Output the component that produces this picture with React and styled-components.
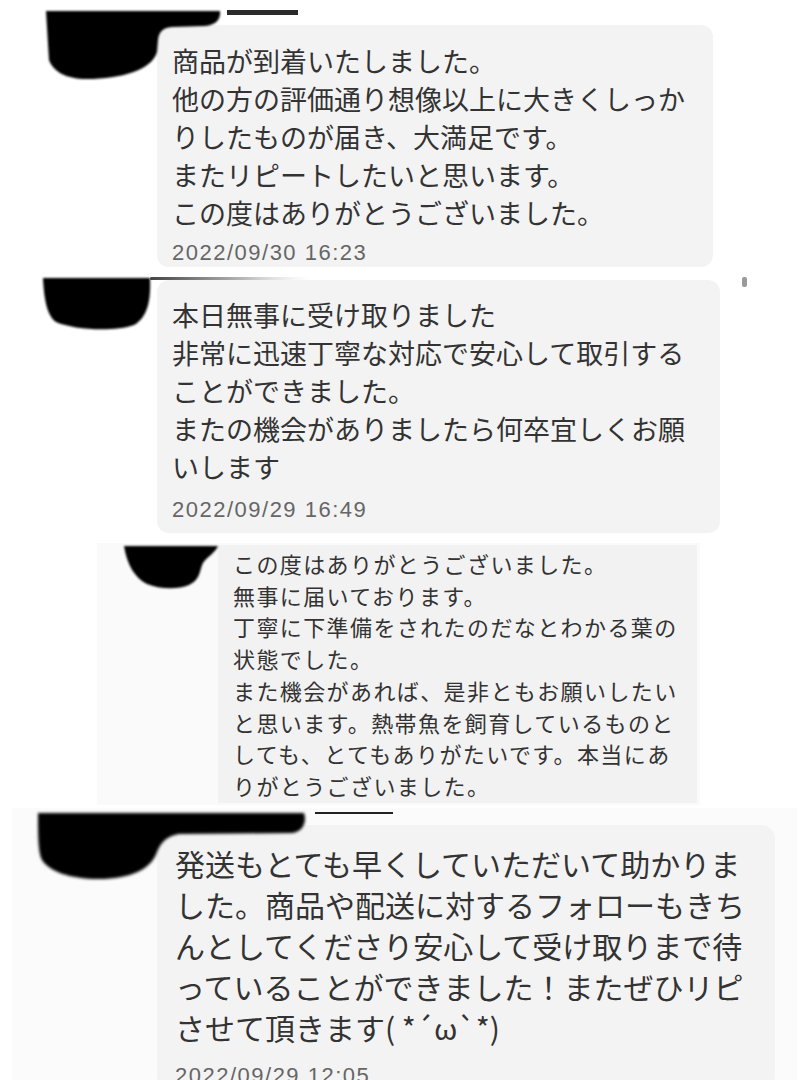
import React from 'react';
import styled, { createGlobalStyle } from 'styled-components';

const GlobalStyle = createGlobalStyle`
  html, body {
    margin: 0;
    padding: 0;
    background: #fff;
  }
  body {
    width: 810px;
    height: 1080px;
    overflow: hidden;
    font-family: "Noto Sans CJK JP", "Noto Sans", sans-serif;
  }
`;

const reviews = [
  {
    id: 1,
    lines: [
      '商品が到着いたしました。',
      '他の方の評価通り想像以上に大きくしっか',
      'りしたものが届き、大満足です。',
      'またリピートしたいと思います。',
      'この度はありがとうございました。',
    ],
    date: '2022/09/30 16:23',
  },
  {
    id: 2,
    lines: [
      '本日無事に受け取りました',
      '非常に迅速丁寧な対応で安心して取引する',
      'ことができました。',
      'またの機会がありましたら何卒宜しくお願',
      'いします',
    ],
    date: '2022/09/29 16:49',
  },
  {
    id: 3,
    lines: [
      'この度はありがとうございました。',
      '無事に届いております。',
      '丁寧に下準備をされたのだなとわかる葉の',
      '状態でした。',
      'また機会があれば、是非ともお願いしたい',
      'と思います。熱帯魚を飼育しているものと',
      'しても、とてもありがたいです。本当にあ',
      'りがとうございました。',
    ],
  },
  {
    id: 4,
    lines: [
      '発送もとても早くしていただいて助かりま',
      'した。商品や配送に対するフォローもきち',
      'んとしてくださり安心して受け取りまで待',
      'っていることができました！またぜひリピ',
      'させて頂きます( *´ω`*)',
    ],
    date: '2022/09/29 12:05',
  },
];

// Redaction blob drawn over each user name
function Blob({ width, height, d, id, blur = 1.2, fade }) {
  return (
    <svg width={width} height={height} viewBox={`0 0 ${width} ${height}`} style={{ overflow: 'visible' }}>
      <defs>
        <filter id={id} x="-10%" y="-10%" width="120%" height="120%">
          <feGaussianBlur stdDeviation={blur} />
        </filter>
        {fade && (
          <linearGradient id={`${id}-fade`} x1="0" x2="1" y1="0" y2="0">
            <stop offset="0" stopColor="#444" />
            <stop offset="0.6" stopColor="#bbb" />
            <stop offset="1" stopColor="#ddd" stopOpacity="0" />
          </linearGradient>
        )}
      </defs>
      {fade && <rect x={fade.x} y="0" width={fade.w} height="3" rx="1.5" fill={`url(#${id}-fade)`} />}
      <path d={d} fill="#000" filter={`url(#${id})`} />
    </svg>
  );
}

function Review({ review, variant }) {
  return (
    <Bubble $variant={variant}>
      <Body $variant={variant}>{review.lines.join('\n')}</Body>
      {review.date && <Stamp $variant={variant}>{review.date}</Stamp>}
    </Bubble>
  );
}

export default function App() {
  return (
    <Page>
      <GlobalStyle />

      <Crop $height={270} $padTop={10} $padLeft={45}>
        <Avatar $width={112}>
          <Blob
            id="b1"
            width={178}
            height={70}
            d="M1,1 L175,1 C176,9 171,15 160,16 L127,17 C117,18 114,22 113,30 L112,42 C107,60 76,69 42,69 C20,69 8,61 4,50 Z"
          />
        </Avatar>
        <Column $width={556}>
          <Meta $height={15}>
            <Rule $offset={70} $w={71} $h={5} $color="#2b2b2b" />
          </Meta>
          <Review review={reviews[0]} variant="large" />
        </Column>
      </Crop>

      <Crop $height={270} $padTop={7} $padLeft={42}>
        <Avatar $width={115}>
          <Blob
            id="b2"
            width={110}
            height={54}
            fade={{ x: 108, w: 160 }}
            d="M1,1 L108,1 C109,22 106,40 92,48 C72,55 32,53 14,45 C5,39 2,22 1,1 Z"
          />
        </Avatar>
        <Column $width={563}>
          <Meta $height={3} />
          <Review review={reviews[1]} variant="medium" />
        </Column>
        <Scroll />
      </Crop>

      <Crop $height={262} $top={3} $left={97} $width={603} $bg="#fafafa" $padTop={2} $padLeft={26}>
        <Avatar $width={95}>
          <Blob
            id="b3"
            width={97}
            height={45}
            d="M1,1 L95,1 C92,8 84,12 80,18 C76,26 78,34 66,40 C54,45 36,44 24,39 C12,33 4,20 1,1 Z"
          />
        </Avatar>
        <Column $width={479}>
          <Review review={reviews[2]} variant="small" />
        </Column>
      </Crop>

      <Crop $height={272} $top={3} $left={12} $width={785} $bg="#fbfbfb" $padTop={4} $padLeft={25}>
        <Avatar $width={120}>
          <Blob
            id="b4"
            width={272}
            height={70}
            blur={1.6}
            d="M1,1 L267,1 C270,10 266,20 255,21 L142,22 C130,24 124,30 120,40 C114,58 92,67 62,67 C32,67 12,59 5,48 C1,40 1,20 1,1 Z"
          />
        </Avatar>
        <Column $width={618}>
          <Meta $height={13}>
            <Rule $offset={158} $w={78} $h={2} $color="#222" />
          </Meta>
          <Review review={reviews[3]} variant="xl" />
        </Column>
      </Crop>
    </Page>
  );
}

const sizes = {
  large: { font: 27, line: 38, pad: '17px 20px 1px 15px', radius: 12, stamp: 8 },
  medium: { font: 27, line: 38, pad: '16px 20px 10px 15px', radius: 12, stamp: 11 },
  small: { font: 22, line: 31.7, pad: '3px 10px 1px 15px', radius: 0, stamp: 0, spacing: 1.4 },
  xl: { font: 30, line: 41, pad: '18px 20px 0 18px', radius: 14, stamp: 15 },
};

const Page = styled.div`
  width: 810px;
  height: 1080px;
  display: flex;
  flex-direction: column;
  overflow: hidden;
  background: #fff;
`;

const Crop = styled.section`
  flex: none;
  display: flex;
  align-items: flex-start;
  box-sizing: border-box;
  height: ${p => p.$height}px;
  margin-top: ${p => p.$top || 0}px;
  margin-left: ${p => p.$left || 0}px;
  width: ${p => (p.$width ? `${p.$width}px` : 'auto')};
  padding: ${p => p.$padTop}px 0 0 ${p => p.$padLeft}px;
  background: ${p => p.$bg || '#fff'};
  overflow: hidden;
`;

const Avatar = styled.div`
  position: relative;
  z-index: 2;
  flex: none;
  width: ${p => p.$width}px;
  line-height: 0;
`;

const Column = styled.div`
  flex: none;
  display: flex;
  flex-direction: column;
  width: ${p => p.$width}px;
`;

const Meta = styled.div`
  display: flex;
  align-items: flex-start;
  height: ${p => p.$height}px;
`;

const Rule = styled.span`
  margin-left: ${p => p.$offset}px;
  width: ${p => p.$w}px;
  height: ${p => p.$h}px;
  background: ${p => p.$color};
`;

const Scroll = styled.span`
  flex: none;
  margin-left: 22px;
  width: 5px;
  height: 10px;
  border-radius: 2px;
  background: #9a9a9a;
`;

const Bubble = styled.div`
  background: ${p => (p.$variant === 'small' ? '#f2f2f2' : '#f3f3f3')};
  border-radius: ${p => sizes[p.$variant].radius}px;
  padding: ${p => sizes[p.$variant].pad};
`;

const Body = styled.p`
  margin: 0;
  white-space: pre;
  color: #333;
  font-family: "Noto Sans CJK JP", "Noto Sans", sans-serif;
  font-size: ${p => sizes[p.$variant].font}px;
  line-height: ${p => sizes[p.$variant].line}px;
  letter-spacing: ${p => sizes[p.$variant].spacing || 0}px;
`;

const Stamp = styled.div`
  margin-top: ${p => sizes[p.$variant].stamp}px;
  font-family: "Liberation Sans", Arial, sans-serif;
  font-size: 22px;
  line-height: 26px;
  letter-spacing: 1.5px;
  color: #666;
`;
